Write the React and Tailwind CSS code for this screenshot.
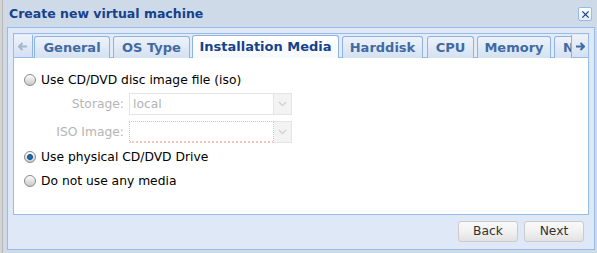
const font = { fontFamily: '"DejaVu Sans", Verdana, sans-serif' };

function Radio({ checked }) {
  return (
    <span className="w-[12px] h-[12px] rounded-full border border-[#8a8a8a] bg-gradient-to-b from-[#fdfdfd] to-[#c9c9c9] flex items-center justify-center shrink-0">
      {checked && <span className="w-[6px] h-[6px] rounded-full bg-[#1b6db7] border border-[#0b4a86]" />}
    </span>
  );
}

function RadioRow({ checked, label }) {
  return (
    <div className="flex items-center gap-[5px] pl-[10px] h-[20px]">
      <Radio checked={checked} />
      <span className="text-[12.3px] text-black">{label}</span>
    </div>
  );
}

function Combo({ value, invalid }) {
  return (
    <div className="flex w-[163px] h-[22px]">
      <div
        className={`flex-1 flex items-center px-[3px] text-[12.3px] text-[#b3b3b3] bg-white border ${
          invalid ? 'border-[#f1b8a6] border-b-2 border-b-[#f4c4c0] border-dotted' : 'border-[#e4e4e4]'
        }`}
      >
        {value}
      </div>
      <div className="w-[18px] bg-[#f3f3f3] border border-l-0 border-[#e4e4e4] flex items-center justify-center">
        <svg width="9" height="6" viewBox="0 0 9 6">
          <path d="M1 1l3.5 3.5L8 1" fill="none" stroke="#cfd3d8" strokeWidth="1.4" />
        </svg>
      </div>
    </div>
  );
}

function Tab({ label, w, gap, active }) {
  return (
    <div
      className={`shrink-0 rounded-t-[3px] border border-b-0 flex items-center justify-center text-[13px] font-bold whitespace-nowrap overflow-hidden ${
        active
          ? 'bg-gradient-to-b from-white to-[#f6f9fd] border-[#8db2e3] text-[#15428b] h-[23px]'
          : 'bg-gradient-to-b from-[#eef3fa] to-[#d4e1f2] border-[#8db2e3] text-[#416aa3] h-[22px]'
      }`}
      style={{ width: w, marginLeft: gap }}
    >
      {label}
    </div>
  );
}

function Button({ children }) {
  return (
    <div className="w-[60px] h-[21px] rounded-[3px] border border-[#cbcbcb] bg-gradient-to-b from-[#f9f9f9] via-[#f1f1f1] to-[#e2e2e2] flex items-center justify-center text-[12.3px] text-[#333]">
      {children}
    </div>
  );
}

export default function App() {
  return (
    <div className="w-[597px] h-[253px] bg-[#cfdae8] flex overflow-hidden" style={font}>
      <div className="w-[3px] shrink-0 bg-[#d4d4d4] border-r border-[#b9b9b9]" />
      <div className="w-[591px] shrink-0 flex flex-col pl-[4px] pb-[3px]">
        <div className="h-[27px] flex items-center justify-between pl-[2px] pr-[2px] pt-[1px]">
          <span className="text-[12.5px] font-bold text-[#15428b]">Create new virtual machine</span>
          <span className="w-[14px] h-[14px] rounded-[2px] border border-[#99bbe8] bg-gradient-to-b from-white to-[#e3ebf6] flex items-center justify-center">
            <svg width="9" height="9" viewBox="0 0 10 10">
              <path d="M1.5 1.5l7 7M8.5 1.5l-7 7" stroke="#15428b" strokeWidth="1.4" />
            </svg>
          </span>
        </div>
        <div className="w-[588px] flex-1 border border-[#99bbe8] bg-[#dfe8f6] flex flex-col pt-[5px] px-[5px]">
          <div className="w-[576px] border border-[#99bbe8] flex flex-col h-[182px]">
            <div className="h-[24px] bg-[#e3ebf7] border-b border-[#99bbe8] flex items-end">
              <div className="w-[19px] shrink-0 h-[22px] bg-gradient-to-b from-[#eef3fa] to-[#d4e1f2] border-r border-[#8db2e3] flex items-center justify-center">
                <svg width="10" height="9" viewBox="0 0 10 9">
                  <path d="M1 4.5h8M4.5 1L1 4.5 4.5 8" fill="none" stroke="#a4b6cc" strokeWidth="2" />
                </svg>
              </div>
              <div className="flex-1 min-w-0 flex items-end overflow-hidden -mb-[1px]">
                <Tab label="General" w={76} gap={1} />
                <Tab label="OS Type" w={77} gap={3} />
                <Tab label="Installation Media" w={147} gap={2} active />
                <Tab label="Harddisk" w={81} gap={3} />
                <Tab label="CPU" w={47} gap={4} />
                <Tab label="Memory" w={74} gap={3} />
                <Tab label="Network" w={80} gap={3} />
              </div>
              <div className="w-[17px] shrink-0 h-[22px] bg-gradient-to-b from-[#eef3fa] to-[#d4e1f2] border-l border-[#8db2e3] flex items-center justify-center">
                <svg width="10" height="9" viewBox="0 0 10 9">
                  <path d="M1 4.5h8M5.5 1L9 4.5 5.5 8" fill="none" stroke="#416aa3" strokeWidth="2" />
                </svg>
              </div>
            </div>
            <div className="flex-1 bg-white flex flex-col pt-[12px]">
              <RadioRow label="Use CD/DVD disc image file (iso)" />
              <div className="flex flex-col gap-[6px] mt-[3px]">
                <div className="flex items-center">
                  <span className="w-[115px] text-right pr-[5px] text-[12.3px] text-[#b5b5b5]">Storage:</span>
                  <Combo value="local" />
                </div>
                <div className="flex items-center">
                  <span className="w-[115px] text-right pr-[5px] text-[12.3px] text-[#b5b5b5]">ISO Image:</span>
                  <Combo value="" invalid />
                </div>
              </div>
              <div className="mt-[4px] flex flex-col gap-[4px]">
                <RadioRow checked label="Use physical CD/DVD Drive" />
                <RadioRow label="Do not use any media" />
              </div>
            </div>
          </div>
          <div className="flex justify-end gap-[6px] pt-[6px] pr-[5px]">
            <Button>Back</Button>
            <Button>Next</Button>
          </div>
        </div>
      </div>
    </div>
  );
}
